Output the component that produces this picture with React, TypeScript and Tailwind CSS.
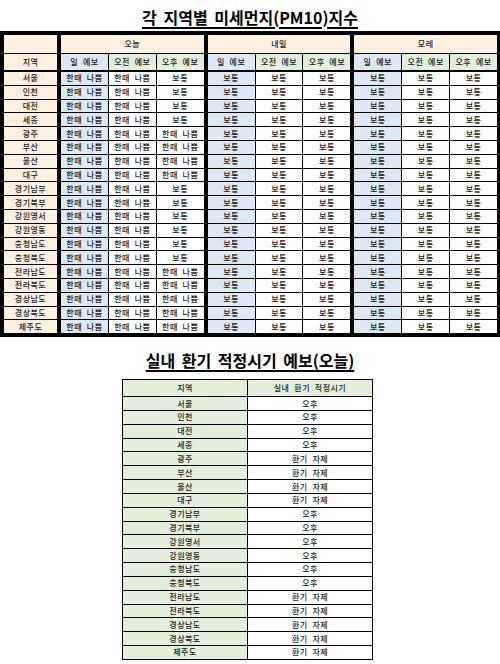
const regions = [
  "서울",
  "인천",
  "대전",
  "세종",
  "광주",
  "부산",
  "울산",
  "대구",
  "경기남부",
  "경기북부",
  "강원영서",
  "강원영동",
  "충청남도",
  "충청북도",
  "전라남도",
  "전라북도",
  "경상남도",
  "경상북도",
  "제주도",
]

// regions where the afternoon is "한때 나쁨" today
const bad = new Set(["광주", "부산", "울산", "대구", "전라남도", "전라북도", "경상남도", "경상북도", "제주도"])

type Forecast = [string, string, string]

const days: { label: string; rows: Forecast[] }[] = [
  {
    label: "오늘",
    rows: regions.map((r) => ["한때 나쁨", "한때 나쁨", bad.has(r) ? "한때 나쁨" : "보통"]),
  },
  { label: "내일", rows: regions.map(() => ["보통", "보통", "보통"]) },
  { label: "모레", rows: regions.map(() => ["보통", "보통", "보통"]) },
]

const Cell = ({ className = "", children }: { className?: string; children?: React.ReactNode }) => (
  <div className={`flex flex-1 items-center justify-center whitespace-nowrap ${className}`}>{children}</div>
)

const DayGroup = ({ label, rows }: { label: string; rows: Forecast[] }) => (
  <div className="flex flex-1 flex-col">
    <div className="flex h-[18px] items-center justify-center bg-[#fdf0de]">{label}</div>
    <div className="mt-px flex h-[16px] gap-px">
      <Cell className="bg-[#dde8f5]">일 예보</Cell>
      <Cell className="bg-[#e2efda]">오전 예보</Cell>
      <Cell className="bg-[#e2efda]">오후 예보</Cell>
    </div>
    <div className="mt-[2px] flex flex-col gap-px">
      {rows.map((row, i) => (
        <div key={i} className="flex h-[12.8px] gap-px">
          <Cell className="bg-[#dde8f5]">{row[0]}</Cell>
          <Cell className="bg-white">{row[1]}</Cell>
          <Cell className="bg-white">{row[2]}</Cell>
        </div>
      ))}
    </div>
  </div>
)

const Title = ({ children }: { children: React.ReactNode }) => (
  <h1 className="text-center text-[16px] font-bold tracking-normal text-black underline decoration-[1.5px] underline-offset-[3px] [word-spacing:3px]">
    {children}
  </h1>
)

export default function App() {
  return (
    <div className="w-[500px] bg-white font-[family-name:'Noto_Sans_CJK_KR',sans-serif] text-[8px] font-medium tracking-[0.5px] text-[#1c1c1c] [word-spacing:2.5px]">
      <div className="flex h-[31px] items-center justify-center pt-[2px]">
        <Title>각 지역별 미세먼지(PM10)지수</Title>
      </div>

      <div className="flex gap-[4px] bg-black pt-[4px] pr-[3px] pb-[4px] pl-[4px]">
        <div className="flex w-[53px] flex-col">
          <div className="h-[18px] bg-[#fdf0de]" />
          <div className="mt-px flex h-[16px] items-center justify-center bg-[#fdf0de]">지역</div>
          <div className="mt-[2px] flex flex-col gap-px">
            {regions.map((r) => (
              <div key={r} className="flex h-[12.8px] items-center justify-center bg-[#fdf0de]">
                {r}
              </div>
            ))}
          </div>
        </div>
        {days.map((d) => (
          <DayGroup key={d.label} label={d.label} rows={d.rows} />
        ))}
      </div>

      <div className="flex h-[42px] items-center justify-center pt-[4px]">
        <Title>실내 환기 적정시기 예보(오늘)</Title>
      </div>

      <div className="ml-[122px] flex w-[251px] flex-col border border-black bg-black">
        <div className="flex h-[16px] gap-px">
          <Cell className="bg-[#e2efda]">지역</Cell>
          <Cell className="bg-[#e2efda]">실내 환기 적정시기</Cell>
        </div>
        {regions.map((r) => (
          <div key={r} className="mt-px flex h-[12.84px] gap-px">
            <Cell className="bg-[#e2efda]">{r}</Cell>
            <Cell className="bg-white">{bad.has(r) ? "환기 자제" : "오후"}</Cell>
          </div>
        ))}
      </div>
    </div>
  )
}
